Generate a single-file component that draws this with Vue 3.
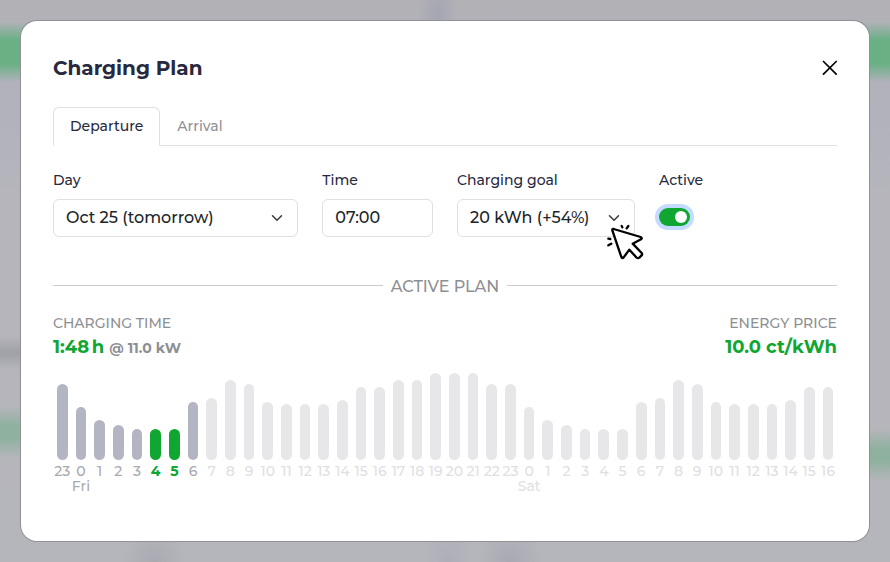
<script setup>
import { ref } from 'vue'

const tab = ref('departure')
const day = ref('tomorrow')
const time = ref('07:00')
const goal = ref('20')
const active = ref(true)

const firstHour = 23
const heights = [
  76, 53, 40, 35, 31, 31, 31, 58, 62, 80, 76, 58, 56, 56, 56, 60, 73, 73, 80, 80, 87,
  87, 87, 76, 76, 53, 40, 35, 31, 31, 31, 58, 62, 80, 76, 58, 56, 56, 56, 60, 73, 73,
]
const dayNames = { 1: 'Fri', 25: 'Sat' }

const slots = heights.map((height, index) => {
  let state = 'later'
  if (index < 8) state = 'available'
  if (index === 5 || index === 6) state = 'charging'
  return { index, height, state, hour: (firstHour + index) % 24, day: dayNames[index] }
})
</script>

<template>
  <div class="backdrop">
    <section class="modal" role="dialog" aria-labelledby="plan-title">
      <header class="header">
        <h1 id="plan-title" class="title">Charging Plan</h1>
        <button class="close" type="button" aria-label="Close">
          <svg viewBox="0 0 16 16" width="16" height="16" fill="none" stroke="currentColor" stroke-width="1.7" stroke-linecap="round">
            <path d="M2.5 1.5 15.2 14.2M15.2 1.5 2.5 14.2" />
          </svg>
        </button>
      </header>

      <nav class="tabs">
        <button class="tab" :class="{ selected: tab === 'departure' }" type="button" @click="tab = 'departure'">Departure</button>
        <button class="tab" :class="{ selected: tab === 'arrival' }" type="button" @click="tab = 'arrival'">Arrival</button>
      </nav>

      <form class="fields" @submit.prevent>
        <div class="field wide">
          <label for="day">Day</label>
          <div class="picker">
            <select id="day" v-model="day" class="control">
              <option value="tomorrow">Oct 25 (tomorrow)</option>
            </select>
            <svg class="chevron" viewBox="0 0 16 16" width="12" height="12" fill="none" stroke="currentColor" stroke-width="2" stroke-linecap="round" stroke-linejoin="round">
              <path d="m2 5 6 6 6-6" />
            </svg>
          </div>
        </div>
        <div class="field narrow">
          <label for="time">Time</label>
          <input id="time" v-model="time" class="control" type="text" />
        </div>
        <div class="field medium">
          <label for="goal">Charging goal</label>
          <div class="picker">
            <select id="goal" v-model="goal" class="control">
              <option value="20">20 kWh (+54%)</option>
            </select>
            <svg class="chevron" viewBox="0 0 16 16" width="12" height="12" fill="none" stroke="currentColor" stroke-width="2" stroke-linecap="round" stroke-linejoin="round">
              <path d="m2 5 6 6 6-6" />
            </svg>
            <svg class="pointer" viewBox="15 87 120 117" width="40" height="39" fill="none" stroke="#000" stroke-width="7" stroke-linecap="round" stroke-linejoin="round">
              <path d="M41 105 122 129Q128 132 123 136L98 149 125 177Q128 181 124 185L118 191Q114 194 110 191L88 167 71 190Q67 195 64 189L37 109Q36 104 41 105Z" fill="#fff" />
              <path d="M65 96 67 100M85 96 80 103M25 134 31 135M25 154 34 149" />
            </svg>
          </div>
        </div>
        <div class="field medium">
          <label for="active">Active</label>
          <div class="toggle-row">
            <input id="active" v-model="active" class="toggle" type="checkbox" role="switch" />
          </div>
        </div>
      </form>

      <h2 class="divider">ACTIVE PLAN</h2>

      <div class="summary">
        <div>
          <div class="caption">CHARGING TIME</div>
          <div class="value">1:48&#8201;h <span class="power">@ 11.0 kW</span></div>
        </div>
        <div class="price">
          <div class="caption">ENERGY PRICE</div>
          <div class="value">10.0 ct/kWh</div>
        </div>
      </div>

      <div class="chart">
        <div v-for="slot in slots" :key="slot.index" class="slot" :class="slot.state">
          <div class="bar" :style="{ height: slot.height + 'px' }"></div>
          <span class="hour">{{ slot.hour }}</span>
          <span class="day-name">{{ slot.day }}</span>
        </div>
      </div>
    </section>
  </div>
</template>

<style>
body {
  margin: 0;
}
</style>

<style scoped>
* {
  box-sizing: border-box;
}

.backdrop {
  display: flex;
  min-height: 100vh;
  padding: 21px;
  font-family: Montserrat, Inter, sans-serif;
  font-size: 14px;
  font-weight: 500;
  color: #28293e;
  background:
    linear-gradient(transparent 22px, #69b085 40px, #69b085 64px, transparent 82px) 0 0 / 100% 100px no-repeat,
    linear-gradient(transparent, #8fb19f 20px, #8fb19f 32px, transparent 52px) 0 406px / 50% 52px no-repeat,
    linear-gradient(transparent, #8fb19f 20px, #8fb19f 32px, transparent 52px) 100% 429px / 50% 52px no-repeat,
    linear-gradient(transparent, #a0a0a8, transparent) 0 336px / 50% 34px no-repeat,
    radial-gradient(closest-side, #a9a9b1, transparent) 122px 520px / 64px 90px no-repeat,
    radial-gradient(closest-side, #adadb8, transparent) 424px 520px / 48px 90px no-repeat,
    radial-gradient(closest-side, #a8a8b3, transparent) 478px 520px / 64px 90px no-repeat,
    radial-gradient(closest-side, #a5a5b2, transparent) 418px -30px / 40px 90px no-repeat,
    linear-gradient(#b1b1b6, #b2b2bd 120px, #b5b5bb 200px, #b5b6bb);
}

.modal {
  flex: 1;
  min-width: 0;
  padding: 32px;
  border-radius: 16px;
  background: #fff;
  box-shadow: 0 0 0 1px #909097;
}

.header {
  display: flex;
  justify-content: space-between;
  align-items: center;
  height: 30px;
}

.title {
  margin: 0;
  font-size: 20px;
  font-weight: 700;
}

.close {
  display: flex;
  padding: 0;
  border: 0;
  background: none;
  color: #000;
}

.tabs {
  display: flex;
  margin-top: 24px;
  border-bottom: 1px solid #dee0e3;
}

.tab {
  height: 39px;
  margin-bottom: -1px;
  padding: 0 16px 2px;
  border: 1px solid transparent;
  border-radius: 6px 6px 0 0;
  background: none;
  font: inherit;
  color: #909195;
}

.tab.selected {
  border-color: #dee0e3;
  border-bottom-color: #fff;
  background: #fff;
  color: #28293e;
}

.fields {
  display: grid;
  grid-template-columns: repeat(12, minmax(0, 1fr));
  column-gap: 24px;
  margin-top: 24px;
}

.field {
  display: flex;
  flex-direction: column;
  gap: 8px;
  line-height: 21px;
}

.wide {
  grid-column: span 4;
}

.narrow {
  grid-column: span 2;
}

.medium {
  grid-column: span 3;
}

.picker {
  position: relative;
  display: grid;
  align-items: center;
}

.control {
  width: 100%;
  height: 38px;
  padding: 0 12px 2px;
  border: 1px solid #dee0e3;
  border-radius: 6px;
  outline: 0;
  appearance: none;
  background: #fff;
  font: inherit;
  font-size: 16px;
  color: #212529;
}

.picker .control,
.chevron {
  grid-area: 1 / 1;
}

.chevron {
  justify-self: end;
  margin-right: 15px;
  color: #343a40;
  pointer-events: none;
}

.pointer {
  position: absolute;
  top: 24px;
  right: -10px;
  pointer-events: none;
}

.toggle-row {
  display: flex;
  align-items: center;
  height: 36px;
}

.toggle {
  display: flex;
  align-items: center;
  justify-content: flex-end;
  width: 31px;
  height: 18px;
  margin: 0;
  padding: 3px;
  border-radius: 9px;
  appearance: none;
  background: #b5b6c3;
  box-shadow: 0 0 0 4px #c2dbfe;
}

.toggle::before {
  content: '';
  width: 12px;
  height: 12px;
  border-radius: 50%;
  background: #fff;
}

.toggle:checked {
  background: #0fa631;
}

.toggle:not(:checked) {
  justify-content: flex-start;
}

.divider {
  display: flex;
  align-items: center;
  gap: 8px;
  margin: 38px 0 0;
  font-size: 16px;
  font-weight: 500;
  line-height: 24px;
  color: #8e8f94;
}

.divider::before,
.divider::after {
  content: '';
  flex: 1;
  height: 1px;
  margin-bottom: 3px;
  background: #cbcdd0;
}

.summary {
  display: flex;
  justify-content: space-between;
  margin-top: 12px;
  line-height: 24px;
}

.price {
  text-align: right;
}

.caption {
  color: #8e8f94;
}

.value {
  font-size: 18px;
  font-weight: 700;
  color: #0fa631;
}

.power {
  font-size: 14px;
  color: #8e8f94;
}

.chart {
  display: flex;
  align-items: flex-end;
  margin-top: 13px;
}

.slot {
  display: flex;
  flex: 1;
  flex-direction: column;
  align-items: center;
  min-width: 0;
  line-height: 15px;
  color: #b4b5c2;
}

.bar {
  align-self: stretch;
  margin: 0 4px 4px;
  border-radius: 6px;
  background: #b4b5c2;
}

.hour,
.day-name {
  white-space: nowrap;
}

.day-name {
  height: 15px;
}

.available {
  color: #a9aaaf;
}

.charging {
  font-weight: 700;
  color: #0fa631;
}

.charging .bar {
  background: #0fa631;
}

.later {
  color: #dfe0e3;
}

.later .bar {
  background: #e7e7ea;
}
</style>
